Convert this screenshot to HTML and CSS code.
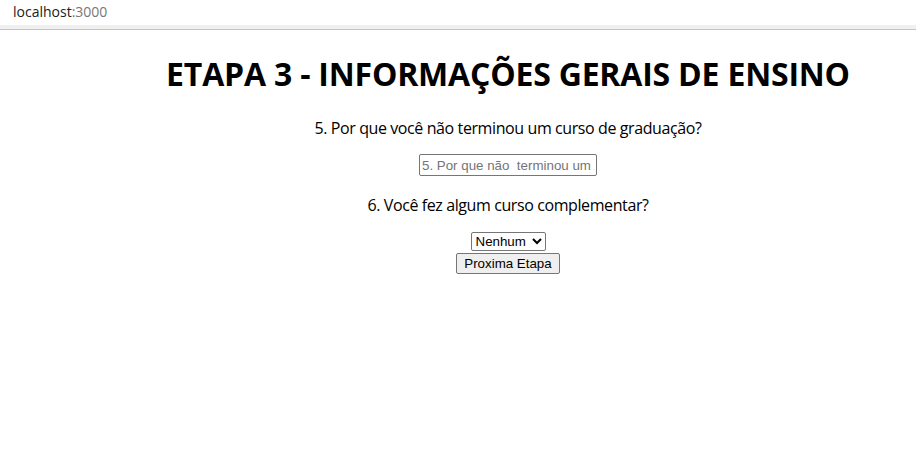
FILE: index.html
```html
<!DOCTYPE html>
<html lang="pt-BR">
<head>
<meta charset="utf-8">
<title>localhost:3000</title>
<link rel="stylesheet" href="styles.css">
</head>
<body>
<header class="addressbar">
  <span class="host">localhost</span><span class="port">:3000</span>
</header>
<main class="page">
  <h1 class="title">ETAPA 3 - INFORMAÇÕES GERAIS DE ENSINO</h1>
  <form class="form">
    <p class="question">5. Por que você não terminou um curso de graduação?</p>
    <input class="text-input" type="text" placeholder="5. Por que não  terminou um">
    <p class="question question-last">6. Você fez algum curso complementar?</p>
    <div class="controls">
      <select class="select">
        <option>Nenhum</option>
        <option>Sim</option>
      </select>
      <button class="button" type="button">Proxima Etapa</button>
    </div>
  </form>
</main>
</body>
</html>
```
FILE: styles.css
```css
html, body {
  margin: 0;
  padding: 0;
  background: #ffffff;
}

body {
  font-family: "Open Sans", "Noto Sans", sans-serif;
  color: #000;
}

.addressbar {
  height: 25px;
  padding-left: 13px;
  font-size: 14px;
  line-height: 23px;
  background: #ffffff;
  border-bottom: 4px solid #f0f0f0;
  box-shadow: 0 1px 0 #c4c4c4;
  margin-bottom: 1px;
}

.host { color: #202020; }
.port { color: #777777; }

.page {
  padding-left: 100px;
  text-align: center;
}

.title {
  font-size: 32px;
  font-weight: 700;
  letter-spacing: -0.2px;
  margin: 23px 0 22px;
  line-height: 43px;
}

.form {
  display: flex;
  flex-direction: column;
  align-items: center;
}

.question {
  font-size: 16px;
  letter-spacing: -0.4px;
  margin: 0 0 15px;
  line-height: 22px;
}

.question-last {
  margin-bottom: 16px;
}

.text-input {
  box-sizing: border-box;
  width: 178px;
  height: 22px;
  font-family: "Liberation Sans", Arial, sans-serif;
  font-size: 13.33px;
  padding: 1px 2px;
  border: 1px solid #767676;
  border-radius: 2px;
  margin: 0 0 18px;
}

.text-input::placeholder { color: #757575; }

.controls {
  display: flex;
  flex-direction: column;
  align-items: center;
  gap: 2px;
}

.select {
  box-sizing: border-box;
  width: 75px;
  height: 19px;
  font-family: "Liberation Sans", Arial, sans-serif;
  font-size: 13.33px;
  border: 1px solid #767676;
  border-radius: 2px;
  background: #fff;
  color: #000;
}

.button {
  box-sizing: border-box;
  width: 104px;
  height: 21px;
  font-family: "Liberation Sans", Arial, sans-serif;
  font-size: 13.33px;
  padding: 1px 6px;
  border: 1px solid #767676;
  border-radius: 2px;
  background: #efefef;
  color: #000;
}
```
